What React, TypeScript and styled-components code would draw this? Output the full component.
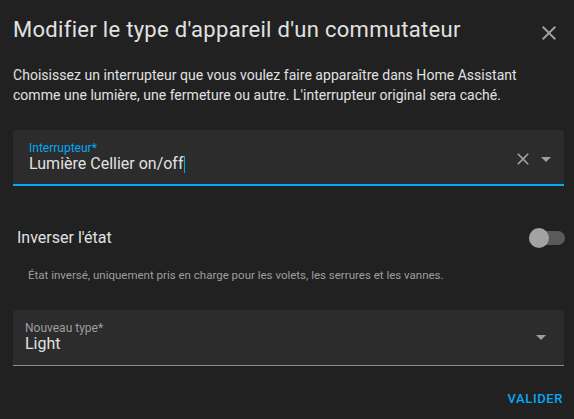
import React from "react";
import styled, { createGlobalStyle } from "styled-components";

const Global = createGlobalStyle`
  html, body { margin: 0; padding: 0; background: #212121; }
  body { font-family: Roboto, "Noto Sans", sans-serif; -webkit-font-smoothing: antialiased; }
`;

const Dialog = styled.div`
  width: 574px;
  height: 419px;
  box-sizing: border-box;
  padding: 16px 10px 0 13px;
  background: #212121;
  color: #e1e1e1;
  display: flex;
  flex-direction: column;
`;

const Header = styled.div`
  display: flex;
  justify-content: space-between;
  align-items: flex-start;
`;

const Title = styled.h2`
  margin: 0;
  font-size: 22px;
  line-height: 28px;
  font-weight: 400;
  letter-spacing: 0.3px;
  color: #e1e1e1;
`;

const CloseButton = styled.button`
  all: unset;
  width: 24px;
  height: 24px;
  margin-top: 5px;
  margin-right: 3px;
  color: #9e9e9e;
  display: flex;
`;

const Description = styled.p`
  margin: 20px 0 0;
  font-size: 14px;
  line-height: 20px;
  letter-spacing: 0.03px;
  color: #e1e1e1;
  padding-right: 6px;
`;

const Field = styled.div<{ $mt: number; $focused?: boolean; $pl: number }>`
  margin-top: ${(p) => p.$mt}px;
  height: 56px;
  box-sizing: border-box;
  background: #2c2c2c;
  border-radius: 4px 4px 0 0;
  border-bottom: ${(p) => (p.$focused ? "2px solid #03a9f4" : "1px solid #8c8c8c")};
  display: flex;
  align-items: flex-start;
  padding-left: ${(p) => p.$pl}px;
`;

const FieldText = styled.div`
  flex: 1;
  display: flex;
  flex-direction: column;
  padding-top: 11px;
`;

const FloatLabel = styled.span<{ $active?: boolean }>`
  font-size: 12px;
  line-height: 14px;
  color: ${(p) => (p.$active ? "#03a9f4" : "#9e9e9e")};
`;

const Value = styled.span`
  font-size: 16px;
  line-height: 18px;
  color: #e1e1e1;
  display: flex;
  align-items: center;
`;

const Caret = styled.span`
  display: inline-block;
  width: 1px;
  height: 17px;
  background: #03a9f4;
  margin-left: 1px;
`;

const Icons = styled.div<{ $mt: number; $pr: number }>`
  display: flex;
  align-items: center;
  margin-top: ${(p) => p.$mt}px;
  padding-right: ${(p) => p.$pr}px;
  color: #9e9e9e;
`;

const ClearIcon = styled.svg`
  width: 20px;
  height: 20px;
  margin-right: 1px;
`;

const ArrowIcon = styled.svg`
  width: 24px;
  height: 24px;
`;

const ToggleRow = styled.div`
  margin-top: 32px;
  height: 40px;
  display: flex;
  align-items: center;
  justify-content: space-between;
  padding-left: 4px;
  margin-right: -1px;
`;

const ToggleLabel = styled.span`
  font-size: 16px;
  line-height: 24px;
  color: #e1e1e1;
`;

const Switch = styled.div`
  position: relative;
  width: 36px;
  height: 14px;
  border-radius: 7px;
  background: #5a5a5a;
`;

const Thumb = styled.div`
  position: absolute;
  left: 0;
  top: -3px;
  width: 20px;
  height: 20px;
  border-radius: 50%;
  background: #a3a3a3;
`;

const Helper = styled.p`
  margin: 9px 0 0;
  padding-left: 15px;
  font-size: 11.5px;
  line-height: 16px;
  color: #9e9e9e;
`;

const Actions = styled.div`
  margin-top: 15px;
  display: flex;
  justify-content: flex-end;
`;

const Button = styled.button`
  all: unset;
  font-family: Roboto, sans-serif;
  font-size: 13px;
  font-weight: 500;
  line-height: 36px;
  letter-spacing: 0.6px;
  text-transform: uppercase;
  color: #03a9f4;
  margin-right: 1px;
`;

const closePath =
  "M19,6.41L17.59,5L12,10.59L6.41,5L5,6.41L10.59,12L5,17.59L6.41,19L12,13.41L17.59,19L19,17.59L13.41,12L19,6.41Z";
const menuDown = "M7,10L12,15L17,10H7Z";

export default function App() {
  return (
    <>
      <Global />
      <Dialog>
        <Header>
          <Title>Modifier le type d'appareil d'un commutateur</Title>
          <CloseButton aria-label="Fermer">
            <svg viewBox="0 0 24 24" width="24" height="24">
              <path d={closePath} fill="currentColor" />
            </svg>
          </CloseButton>
        </Header>
        <Description>
          Choisissez un interrupteur que vous voulez faire apparaître dans Home Assistant
          comme une lumière, une fermeture ou autre. L'interrupteur original sera caché.
        </Description>

        <Field $mt={25} $focused $pl={16}>
          <FieldText>
            <FloatLabel $active>Interrupteur*</FloatLabel>
            <Value>
              Lumière Cellier on/off
              <Caret />
            </Value>
          </FieldText>
          <Icons $mt={17} $pr={6}>
            <ClearIcon viewBox="0 0 24 24">
              <path d={closePath} fill="currentColor" />
            </ClearIcon>
            <ArrowIcon viewBox="0 0 24 24">
              <path d={menuDown} fill="currentColor" />
            </ArrowIcon>
          </Icons>
        </Field>

        <ToggleRow>
          <ToggleLabel>Inverser l'état</ToggleLabel>
          <Switch>
            <Thumb />
          </Switch>
        </ToggleRow>
        <Helper>État inversé, uniquement pris en charge pour les volets, les serrures et les vannes.</Helper>

        <Field $mt={27} $pl={12}>
          <FieldText>
            <FloatLabel>Nouveau type*</FloatLabel>
            <Value>Light</Value>
          </FieldText>
          <Icons $mt={15} $pr={11}>
            <ArrowIcon viewBox="0 0 24 24">
              <path d={menuDown} fill="currentColor" />
            </ArrowIcon>
          </Icons>
        </Field>

        <Actions>
          <Button>Valider</Button>
        </Actions>
      </Dialog>
    </>
  );
}
